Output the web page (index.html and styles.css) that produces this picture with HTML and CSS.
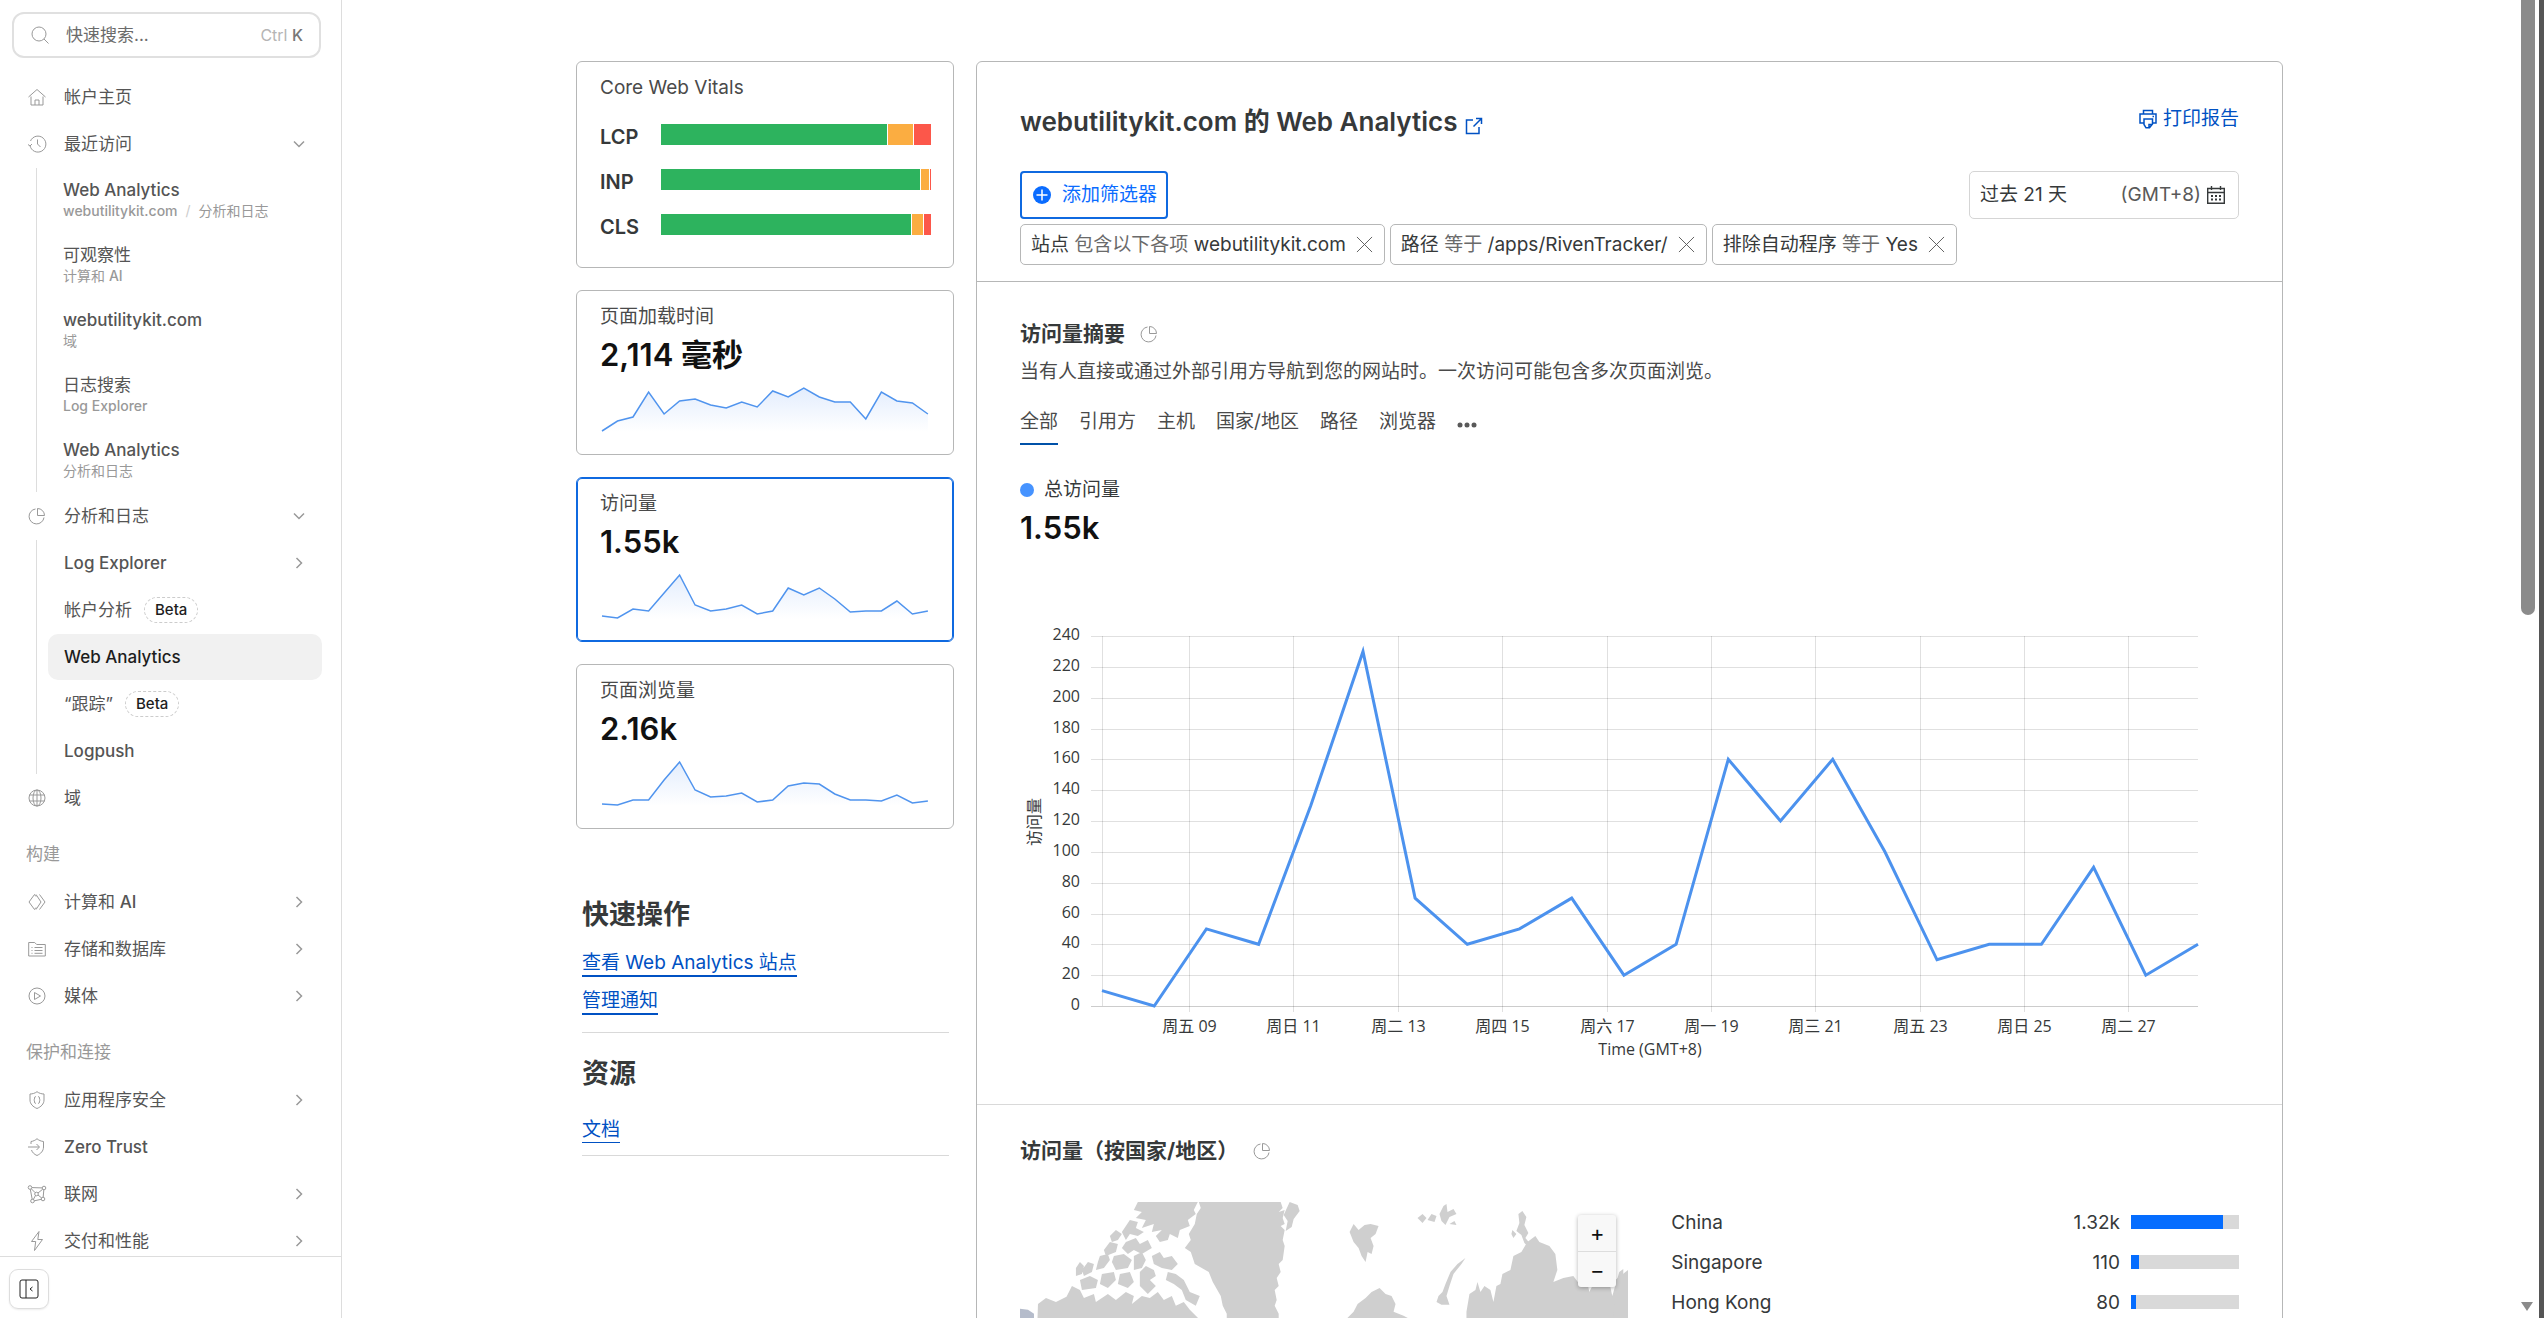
FILE: index.html
```html
<!DOCTYPE html>
<html lang="zh-CN">
<head>
  <meta charset="UTF-8">
  <title>Web Analytics</title>
  <meta name="viewport" content="width=device-width, initial-scale=1.0">
  <link rel="stylesheet" href="styles.css">
</head>
<body>
  <!-- shared icons -->
  <svg class="sprite" aria-hidden="true">
    <symbol id="i-down" viewBox="0 0 12 12"><path d="M1 3.500l5 5 5-5"/></symbol>
    <symbol id="i-right" viewBox="0 0 12 12"><path d="M3.500 1l5 5-5 5"/></symbol>
    <symbol id="i-pie" viewBox="0 0 18 18"><path d="M7.500 2A7.500 7.500 0 1 0 16 10.500M9.500 1.500v7h7a7 7 0 0 0-7-7z"/></symbol>
    <symbol id="i-close" viewBox="0 0 18 18"><path d="M1 1l16 16M17 1L1 17"/></symbol>
  </svg>

  <aside class="sidebar">
    <label class="search">
      <svg class="icon" viewBox="0 0 18 18"><circle cx="8" cy="8" r="7"/><path d="M13 13l4.500 4.500"/></svg>
      <input type="text" placeholder="快速搜索..." aria-label="快速搜索">
      <span class="keys">Ctrl <b>K</b></span>
    </label>

    <nav class="menu">
      <a class="row" href="#">
        <svg class="icon" viewBox="0 0 18 18"><path d="M.5 9L9 1.500 17.500 9M3 8.500V17h12V8.500M7 17v-5h4v5"/></svg>
        <span>帐户主页</span>
      </a>
      <button class="row" type="button">
        <svg class="icon" viewBox="0 0 18 18"><path d="M2 10.500a8 8 0 1 0 .5-4.500M0 9.500l2 1.500 2-2M9.500 4.500V9l3 3"/></svg>
        <span>最近访问</span>
        <svg class="chev"><use href="#i-down"/></svg>
      </button>
      <div class="sub">
        <a class="recent" href="#"><span class="en">Web Analytics</span><small><b>webutilitykit.com</b> <i>/</i> 分析和日志</small></a>
        <a class="recent" href="#"><span>可观察性</span><small>计算和 <b>AI</b></small></a>
        <a class="recent" href="#"><span class="en">webutilitykit.com</span><small>域</small></a>
        <a class="recent" href="#"><span>日志搜索</span><small><b>Log Explorer</b></small></a>
        <a class="recent" href="#"><span class="en">Web Analytics</span><small>分析和日志</small></a>
      </div>
      <button class="row" type="button">
        <svg class="icon"><use href="#i-pie"/></svg>
        <span>分析和日志</span>
        <svg class="chev"><use href="#i-down"/></svg>
      </button>
      <div class="sub">
        <button class="row" type="button"><span class="en">Log Explorer</span><svg class="chev"><use href="#i-right"/></svg></button>
        <a class="row" href="#"><span>帐户分析</span><em class="beta">Beta</em></a>
        <a class="row active" href="#"><span class="en">Web Analytics</span></a>
        <a class="row" href="#"><span>“跟踪”</span><em class="beta">Beta</em></a>
        <a class="row" href="#"><span class="en">Logpush</span></a>
      </div>
      <a class="row" href="#">
        <svg class="icon" viewBox="0 0 18 18"><circle cx="9" cy="9" r="8"/><ellipse cx="9" cy="9" rx="4" ry="8"/><path d="M9 1v16M1.500 6h15M1.500 12h15"/></svg>
        <span>域</span>
      </a>

      <h6 class="group">构建</h6>
      <button class="row" type="button">
        <svg class="icon" viewBox="0 0 18 18"><path d="M8 3.500L6.500 1.500 1 9l5.500 7.500L8 14.500M8 1.500L13 9l-5 7.500M11.500 1.500L17 9l-5.500 7.500"/></svg>
        <span>计算和 <b>AI</b></span>
        <svg class="chev"><use href="#i-right"/></svg>
      </button>
      <button class="row" type="button">
        <svg class="icon" viewBox="0 0 18 18"><path d="M.7 16V2.500h6l2 2h8.600V16zM3.500 7.500h1M6.500 7.500h8M3.500 10.500h1M6.500 10.500h8M3.500 13.300h1M6.500 13.300h8"/></svg>
        <span>存储和数据库</span>
        <svg class="chev"><use href="#i-right"/></svg>
      </button>
      <button class="row" type="button">
        <svg class="icon" viewBox="0 0 18 18"><circle cx="9" cy="9" r="8"/><path d="M6.500 5.500v7l6-3.500z"/></svg>
        <span>媒体</span>
        <svg class="chev"><use href="#i-right"/></svg>
      </button>

      <h6 class="group">保护和连接</h6>
      <button class="row" type="button">
        <svg class="icon" viewBox="0 0 18 18"><path d="M9 .7c2 1.500 4.500 2.300 7 2.300v6c0 4-3 6.800-7 8.500C5 15.800 2 13 2 9V3c2.500 0 5-.8 7-2.300zM7.800 5.500c-2 0-.6 3-2 3.500 1.400.5 0 3.500 2 3.500M10.200 5.500c2 0 .6 3 2 3.500-1.400.5 0 3.500-2 3.500"/></svg>
        <span>应用程序安全</span>
        <svg class="chev"><use href="#i-right"/></svg>
      </button>
      <a class="row" href="#">
        <svg class="icon" viewBox="0 0 18 18"><path d="M3 6V3.500c2.300-.3 4.300-1.200 6-2.800 1.700 1.600 4 2.500 6.500 2.800V9c0 4-2.800 6.800-6.500 8.500-2.800-1.200-4.700-3-5.500-5.500M0 9h11M8.500 6l3 3-3 3"/></svg>
        <span class="en">Zero Trust</span>
      </a>
      <button class="row" type="button">
        <svg class="icon" viewBox="0 0 18 18"><circle cx="2" cy="2.500" r="1.800"/><circle cx="16" cy="3" r="1.800"/><circle cx="4.500" cy="16" r="1.800"/><circle cx="15" cy="14" r="1.800"/><circle cx="8.500" cy="9" r="1.800"/><path d="M4 2.600l10 .3M2.300 4.300l1.900 10M15.800 5l-.6 7M6.300 15.800l7-1.500M3.500 4l3.700 3.700M14.600 4.300L10 8M7.500 10.500l-2.200 4M10 10l3.700 3"/></svg>
        <span>联网</span>
        <svg class="chev"><use href="#i-right"/></svg>
      </button>
      <button class="row" type="button">
        <svg class="icon" viewBox="0 0 18 18"><path d="M11-.5L3.500 9.500h4.200L6.500 18.500l8-11h-4.700z"/></svg>
        <span>交付和性能</span>
        <svg class="chev"><use href="#i-right"/></svg>
      </button>
    </nav>

    <div class="side-foot">
      <button type="button" class="collapse" aria-label="收起侧边栏">
        <svg viewBox="0 0 20 20"><rect x="1" y="1" width="18" height="18" rx="2"/><path d="M7 1v18M13.500 8L11 10l2.500 2"/></svg>
      </button>
    </div>
  </aside>

  <main class="main">
    <div class="page">
      <div class="left">
        <section class="card vitals">
          <h4>Core Web Vitals</h4>
          <div class="vital"><b>LCP</b><div class="bar"><i class="good" style="flex-grow:225"></i><i class="mid" style="flex-grow:25"></i><i class="bad" style="flex-grow:17"></i></div></div>
          <div class="vital"><b>INP</b><div class="bar"><i class="good" style="flex-grow:258"></i><i class="mid" style="flex-grow:8"></i><i class="bad" style="flex-grow:1"></i></div></div>
          <div class="vital"><b>CLS</b><div class="bar"><i class="good" style="flex-grow:249"></i><i class="mid" style="flex-grow:11"></i><i class="bad" style="flex-grow:7"></i></div></div>
        </section>
        <section class="card metric">
          <h4>页面加载时间</h4>
          <strong>2,114 毫秒</strong>
          <svg class="spark" data-spark="load" viewBox="0 0 331 44"></svg>
        </section>
        <section class="card metric selected">
          <h4>访问量</h4>
          <strong>1.55k</strong>
          <svg class="spark" data-spark="visits" viewBox="0 0 331 44"></svg>
        </section>
        <section class="card metric">
          <h4>页面浏览量</h4>
          <strong>2.16k</strong>
          <svg class="spark" data-spark="views" viewBox="0 0 331 44"></svg>
        </section>

        <div class="links">
          <h3>快速操作</h3>
          <a href="#">查看 Web Analytics 站点</a>
          <a href="#">管理通知</a>
        </div>
        <div class="links docs">
          <h3>资源</h3>
          <a href="#">文档</a>
        </div>
      </div>

      <div class="card report">
        <header class="head">
          <div class="title-row">
            <h1>webutilitykit.com 的 Web Analytics
              <a href="#" aria-label="打开站点"><svg class="ext" viewBox="0 0 18 18"><path d="M8 3H1.500v13.500H14V10M11 1.500h5.500V7M16.500 1.500L8.500 9.500"/></svg></a>
            </h1>
            <a class="print" href="#">
              <svg viewBox="0 0 18 20"><path d="M4.500 5V1.500h9V5M4.500 14H1V5h16v9h-3.500M5 10h8.500v5l-3 3.800H7L5 15.500zM10 18.500v-3h3.500M13.500 7.500h1.500"/></svg>
              打印报告
            </a>
          </div>
          <div class="filter-row">
            <button type="button" class="add">
              <svg viewBox="0 0 18 18"><circle cx="9" cy="9" r="9"/><path d="M9 3.500v11M3.500 9h11"/></svg>
              添加筛选器
            </button>
            <button type="button" class="date">
              <span>过去 21 天</span>
              <span class="tz">(GMT+8)</span>
              <svg viewBox="0 0 18 18"><path d="M.7 2.500h16.600v14.800H.7zM.7 6.500h16.600M4.500 0v4M13.500 0v4"/><path class="dots" d="M4 10h2M8 10h2M12 10h2M4 13.500h2M8 13.500h2M12 13.500h2"/></svg>
            </button>
          </div>
          <div class="chips">
            <span class="chip"><span>站点 <i>包含以下各项</i> webutilitykit.com</span><button type="button" aria-label="移除"><svg><use href="#i-close"/></svg></button></span>
            <span class="chip"><span>路径 <i>等于</i> /apps/RivenTracker/</span><button type="button" aria-label="移除"><svg><use href="#i-close"/></svg></button></span>
            <span class="chip"><span>排除自动程序 <i>等于</i> Yes</span><button type="button" aria-label="移除"><svg><use href="#i-close"/></svg></button></span>
          </div>
        </header>

        <section class="summary">
          <h2>访问量摘要 <svg><use href="#i-pie"/></svg></h2>
          <p>当有人直接或通过外部引用方导航到您的网站时。一次访问可能包含多次页面浏览。</p>
          <div class="tabs">
            <button type="button" class="on">全部</button>
            <button type="button">引用方</button>
            <button type="button">主机</button>
            <button type="button">国家/地区</button>
            <button type="button">路径</button>
            <button type="button">浏览器</button>
            <button type="button" aria-label="更多"><svg viewBox="0 0 20 6"><circle cx="3" cy="3" r="2.500"/><circle cx="10" cy="3" r="2.500"/><circle cx="17" cy="3" r="2.500"/></svg></button>
          </div>
          <div class="legend"><i></i>总访问量</div>
          <strong class="total">1.55k</strong>
          <svg class="chart" id="chart" viewBox="0 0 1219 442"></svg>
        </section>

        <section class="geo">
          <h2>访问量（按国家/地区） <svg><use href="#i-pie"/></svg></h2>
          <div class="geo-grid">
            <div class="map">
              <svg viewBox="0 0 609 320">
                <!-- arctic islands -->
                <path d="M118 0h60l-4 8 2 4-8 6 2 6-10 4-2 8-8-4-2 6-8 2-4-6 6-6-10 2 2-8-12 4 4-8-10-2 6-6-8-2zM110 18l8 2-2 6 8 4-6 4-8-2-4 6-4-8zM96 28l6 4-4 6-6 2-2-6zM106 40l10-4 4 6 8-4 4 8-10 6-8-4-6 4-6-6zM90 40l8 2-2 8-10 4-2-6zM80 54l8-2 2 6-6 8-8 2 2-8zM94 54l10-2 8 6-4 8-12 2-4-8zM114 54l8-4 4 8-4 8-8 2zM68 60l6 2-2 8-8 4-2-6zM56 66l4-6 4 4-2 8-6 2zM60 78l10-4 8 4-2 8-14 2zM82 72l12-2 2 8-8 8-8-4zM100 72l10-2 4 10-6 6-10-4zM120 70l6-6 8 4 2 6-6 4 6 6-8 8-8-8zM132 54l8-4 4 6 8-2 6 8-6 6-10-2-8-4zM148 70l8 2 8 6 6 12 10 4-4 10-10-6-4-10-8-6-8-4z"/>
                <!-- mainland coast -->
                <path d="M52 84l8 4 4 8 10-4 2 8 12-8 8 6 10-8 8 4-2 8 10-8 8 2 8-6 6 8 8-4 4 10 8-4 6 8 8 8 10 6v108H40V108zM18 102l8-6 10 4 12-6 4 20 6 106H14z"/>
                <path class="us" d="M0 107l8 1 6 4v108H0z"/>
                <!-- greenland -->
                <path d="M180 0h81l2 6-4 4 6-2-2 8 2 6-4 2 4 4-2 10 2 6-2 14-4 4 2 8-4 6 2 8-4 4 2 10-2 6 4 8v104h-52V112l-4-8-2-10-8-14-4-10-14-8-4-12-6-4 6-8-2-6 6-10 2-10 4-6-2-6z"/>
                <path d="M270 0l8 3 2 6-6 8-2 8-6 4 2-10-4-6zM330 30l4-8 5 6 6-5 6-1 8 2-3 8-5 4 3 8-2 8-4-2-2 10-4-6-3-8-5-6zM398 16l5-4 4 4-4 5zM408 18l4-6 5 2-2 6zM420 12l4-8 3-2 1 8 6-3 3 5-7 3-4 8-4-4zM430 22l5-3 2 4z"/>
                <path d="M493 28l4 4-3 4-2-4zM499 12l4-3 4 6-2 8 4 8-3 5 5 6 5 3 3 8-6 1-4-9-4-4-3-8-5-4 3-8zM446 56l-8 6-7 8-5 12-3 8-4 4-2 6 5 3 8 0-3-9 3-10 4-12 8-10z"/>
                <!-- eurasia -->
                <path d="M328 116l6-6 4-8 8-6 6-6 8-4 6 6 6 2 4 8-2 8 10 4 12 6v104H328zM447 118v-8l3-18 6-4 2-8 3 10 4-6 6 4 3 12 3-16 4-2 2-10 8-4 3-14 8-4 6-10 8-6 4 6 10 4 6 8 2 16-4 12 10-4 10-2 6 8 8-2 2 10 6-12 8 6 6-4 3 14 7-24 4-3V220H447z"/>
                <path d="M596 78l13-10v152h-20z"/>
              </svg>
              <div class="zoom">
                <button type="button" aria-label="放大">+</button>
                <button type="button" aria-label="缩小">−</button>
              </div>
            </div>
            <table class="countries">
              <tr><th scope="row">China</th><td>1.32k</td><td class="meter"><div><i style="width:85%"></i></div></td></tr>
              <tr><th scope="row">Singapore</th><td>110</td><td class="meter"><div><i style="width:7%"></i></div></td></tr>
              <tr><th scope="row">Hong Kong</th><td>80</td><td class="meter"><div><i style="width:5%"></i></div></td></tr>
            </table>
          </div>
        </section>
      </div>
    </div>
  </main>

  <div class="scroll" aria-hidden="true">
    <div class="thumb"></div>
    <svg viewBox="0 0 12 10"><path d="M0 0h12L6 9z"/></svg>
  </div>

  <script src="charts.js"></script>
</body>
</html>
```
FILE: styles.css
```css
* {
  box-sizing: border-box;
}

body {
  margin: 0;
  height: 100vh;
  display: flex;
  overflow: hidden;
  background: #fff;
  color: #36393a;
  font-family: Inter, "Noto Sans CJK SC", sans-serif;
  font-size: 19px;
}

h1, h2, h3, h4, h6, p {
  margin: 0;
}

a {
  color: inherit;
  text-decoration: none;
}

button {
  font: inherit;
  color: inherit;
  background: none;
  border: 0;
  padding: 0;
  cursor: pointer;
}

i, em {
  font-style: normal;
}

svg {
  fill: none;
  stroke: currentColor;
  flex: none;
}

.sprite {
  display: none;
}

/* sidebar */
.sidebar {
  width: 342px;
  flex: none;
  display: flex;
  flex-direction: column;
  border-right: 1px solid #ddd;
  font-size: 17px;
  color: #555;
}

.sidebar b,
.en {
  font-weight: 500;
}

.search {
  display: flex;
  align-items: center;
  gap: 17px;
  height: 46px;
  margin: 12px 20px 16px 12px;
  padding: 0 16px 0 17px;
  border: 2px solid #e0e0e0;
  border-radius: 12px;
}

.search input {
  flex: 1;
  min-width: 0;
  border: 0;
  outline: 0;
  padding: 0;
  font: inherit;
  color: #555;
}

.search input::placeholder {
  color: #6b6b6b;
}

.keys {
  font-size: 16px;
  color: #b5b5b5;
}

.keys b {
  color: #777;
}

.icon {
  width: 18px;
  height: 18px;
  color: #999;
  overflow: visible;
}

.menu {
  flex: 1;
  min-height: 0;
  overflow: hidden;
  display: flex;
  flex-direction: column;
  gap: 1px;
  padding: 0 19px 0 12px;
}

.row {
  display: flex;
  flex: none;
  align-items: center;
  gap: 18px;
  width: 100%;
  height: 46px;
  padding: 0 17px 0 16px;
  border-radius: 10px;
  line-height: 24px;
  text-align: left;
}

.row.active {
  background: #f1f1f1;
  color: #1d1d1d;
}

.chev {
  width: 12px;
  height: 12px;
  margin-left: auto;
  color: #999;
  stroke-width: 1.500;
}

.sub {
  flex: none;
  display: flex;
  flex-direction: column;
  gap: 1px;
  margin-left: 24px;
  padding-left: 11px;
  border-left: 1px solid #ddd;
}

.sub .row {
  gap: 12px;
}

.recent {
  display: flex;
  flex-direction: column;
  justify-content: center;
  height: 64px;
  padding-left: 15px;
  line-height: 22px;
}

.recent small {
  font-size: 14px;
  line-height: 20px;
  color: #999;
}

.recent i {
  margin: 0 4px;
  color: #ccc;
}

.beta {
  height: 26px;
  padding: 0 10px;
  border: 1px dashed #ccc;
  border-radius: 13px;
  font-size: 15px;
  font-weight: 500;
  line-height: 24px;
  color: #1d1d1d;
}

.group {
  flex: none;
  padding: 20px 14px 12px;
  font-size: 17px;
  font-weight: 400;
  line-height: 24px;
  color: #999;
}

.side-foot {
  padding: 12px 9px 9px;
  border-top: 1px solid #ddd;
}

.collapse {
  display: flex;
  align-items: center;
  justify-content: center;
  width: 40px;
  height: 40px;
  border: 1px solid #ddd;
  border-radius: 9px;
  box-shadow: 0 1px 2px rgba(0, 0, 0, 0.08);
  color: #222;
}

.collapse svg {
  width: 20px;
  height: 20px;
}

/* main */
.main {
  flex: 1;
  min-width: 0;
  overflow: hidden;
}

.page {
  display: grid;
  grid-template-columns: 378px minmax(0, 1fr);
  align-items: start;
  gap: 22px;
  max-width: 1707px;
  margin: 0 auto;
  padding-top: 61px;
}

.card {
  border: 1px solid #b6b7b7;
  border-radius: 6px;
}

.left {
  display: flex;
  flex-direction: column;
  gap: 22px;
}

.card h4 {
  font-size: 19px;
  font-weight: 400;
  line-height: 24px;
  color: #4a4a4a;
}

.vitals {
  padding: 14px 22px 8px 23px;
}

.vitals h4 {
  margin-bottom: 24px;
}

.vital {
  display: flex;
  height: 45px;
}

.vital b {
  width: 61px;
  font-size: 20px;
  font-weight: 600;
  line-height: 26px;
}

.bar {
  flex: 1;
  display: flex;
  gap: 1px;
  height: 21px;
}

.bar i {
  flex-basis: 0;
}

.good { background: #2db35e; }
.mid { background: #fbad41; }
.bad { background: #fc574a; }

.metric {
  display: flex;
  flex-direction: column;
  padding: 14px 22px 22px 23px;
}

.metric.selected {
  border-color: #0f69e0;
  box-shadow: inset 0 0 0 1px #0f69e0;
}

.metric strong,
.total {
  display: block;
  margin-top: 7px;
  font-size: 31px;
  font-weight: 600;
  line-height: 38px;
  color: #111;
}

.spark {
  display: block;
  width: 100%;
  margin-top: 14px;
  overflow: visible;
}

.spark-line {
  stroke: #5094ee;
  stroke-width: 1.500;
}

.spark-fill {
  stroke: none;
  fill: url(#spark-fade);
}

.links {
  display: flex;
  flex-direction: column;
  align-items: flex-start;
  gap: 12px;
  margin: 48px 5px 0 6px;
  padding-bottom: 17px;
  border-bottom: 1px solid #d9d9d9;
}

.links h3 {
  margin-bottom: 8px;
  font-size: 27px;
  line-height: 32px;
}

.links a {
  line-height: 24px;
  border-bottom: 2px solid #0051c3;
  color: #0051c3;
}

.docs {
  margin-top: 3px;
  padding-bottom: 12px;
}

.docs h3 {
  margin-bottom: 16px;
}

.docs a {
  border-bottom-width: 1px;
}

.head {
  padding: 43px 43px 16px;
  border-bottom: 1px solid #b6b7b7;
}

.title-row,
.filter-row {
  display: flex;
  justify-content: space-between;
}

.title-row {
  margin-bottom: 32px;
}

h1 {
  font-size: 26px;
  font-weight: 600;
  line-height: 34px;
}

.ext {
  width: 18px;
  height: 18px;
  margin-left: 1px;
  vertical-align: -4px;
  color: #0051c3;
  stroke-width: 1.500;
}

.print {
  display: flex;
  align-items: center;
  gap: 6px;
  height: 28px;
  line-height: 28px;
  color: #0051c3;
}

.print svg {
  width: 18px;
  height: 20px;
  stroke-width: 1.500;
}

.add,
.date {
  display: flex;
  align-items: center;
  height: 48px;
  border: 1px solid #d5d5d5;
  border-radius: 5px;
  line-height: 24px;
}

.add {
  gap: 11px;
  padding: 0 9px 0 11px;
  border: 2px solid #0f69e0;
  border-radius: 4px;
  color: #0a6cff;
}

.add svg {
  width: 18px;
  height: 18px;
  fill: #0a6cff;
  stroke: none;
}

.add path {
  stroke: #fff;
  stroke-width: 1.500;
}

.date {
  width: 270px;
  padding: 0 13px 0 10px;
}

.date .tz {
  margin-left: auto;
  margin-right: 6px;
  color: #595959;
}

.date svg {
  width: 18px;
  height: 18px;
  stroke-width: 1.400;
}

.date .dots {
  stroke-width: 2;
}

.chips {
  display: flex;
  gap: 5px;
  margin-top: 5px;
}

.chip {
  display: flex;
  align-items: center;
  gap: 10px;
  height: 41px;
  padding: 0 11px 0 10px;
  border: 1px solid #b6b7b7;
  border-radius: 5px;
  line-height: 24px;
}

.chip i {
  color: #6a6a6a;
}

.chip button,
.chip svg {
  display: block;
  width: 17px;
  height: 17px;
  color: #595959;
}

.summary {
  padding: 39px 43px 42px;
}

h2 {
  font-size: 21px;
  line-height: 26px;
}

h2 svg {
  width: 18px;
  height: 18px;
  margin-left: 10px;
  vertical-align: -2px;
  color: #999;
}

.summary p {
  margin-top: 11px;
  line-height: 28px;
  color: #4a4a4a;
}

.tabs {
  display: flex;
  gap: 21px;
  margin-top: 22px;
}

.tabs button {
  height: 37px;
  padding-bottom: 7px;
  border-bottom: 2px solid transparent;
  line-height: 28px;
  color: #4a4a4a;
}

.tabs .on {
  border-color: #0051a8;
}

.tabs svg {
  width: 20px;
  height: 6px;
  fill: #595959;
  stroke: none;
}

.legend {
  display: flex;
  align-items: center;
  gap: 10px;
  margin-top: 31px;
  line-height: 28px;
}

.legend i {
  width: 14px;
  height: 14px;
  border-radius: 50%;
  background: #4693ff;
}

.total {
  margin-top: 5px;
}

.chart {
  display: block;
  width: 100%;
  margin-top: 73px;
}

.chart text {
  font-family: "Open Sans", "Noto Sans CJK SC", sans-serif;
  font-size: 16px;
  fill: #36393a;
  stroke: none;
}

.chart line {
  stroke: #000;
  stroke-opacity: 0.120;
}

.chart .axis {
  stroke-opacity: 0.200;
}

.chart polyline {
  stroke: #4c92ee;
  stroke-width: 3;
}

.geo {
  padding: 33px 43px;
  border-top: 1px solid #d9d9d9;
}

.geo-grid {
  display: grid;
  grid-template-columns: minmax(0, 15fr) minmax(0, 14fr);
  align-items: start;
  gap: 43px;
  margin-top: 38px;
}

.map {
  position: relative;
}

.map > svg {
  display: block;
  width: 100%;
  fill: #cfcfcf;
  stroke: none;
}

.map .us {
  fill: #b5bccb;
}

.zoom {
  position: absolute;
  top: 13px;
  right: 12px;
  display: flex;
  flex-direction: column;
  width: 38px;
  border-radius: 3px;
  background: #f8f8f8;
  box-shadow: 0 1px 4px rgba(0, 0, 0, 0.3);
}

.zoom button {
  height: 36px;
  font-size: 22px;
  line-height: 34px;
  color: #111;
}

.zoom button + button {
  border-top: 1px solid #ddd;
}

.countries {
  width: 100%;
  border-collapse: collapse;
}

.countries tr {
  height: 40px;
}

.countries th {
  padding: 0;
  font-weight: 400;
  text-align: left;
}

.countries td {
  padding: 0;
  text-align: right;
}

.countries .meter {
  width: 119px;
  padding-left: 11px;
}

.meter div {
  height: 14px;
  background: #d9d9d9;
}

.meter i {
  display: block;
  height: 14px;
  background: #056dff;
}

/* page scrollbar */
.scroll {
  flex: none;
  display: flex;
  flex-direction: column;
  justify-content: space-between;
  width: 27px;
  padding: 0 8px 6px 4px;
  border-right: 5px solid #555;
}

.thumb {
  height: 615px;
  width: 14px;
  border-radius: 0 0 7px 7px;
  background: #8b8b8b;
}

.scroll svg {
  width: 12px;
  height: 10px;
  fill: #8b8b8b;
  stroke: none;
}
```
FILE: charts.js
```js
const sparks = {
  // pixels below the top of the sparkline
  load: [43, 33, 29, 4, 26, 13, 11, 17, 20, 14, 19, 3, 9, 0, 9, 14, 14, 31, 4, 13, 15, 26],
  visits: [41, 43, 34, 36, 18, 0, 30, 36, 34, 30, 39, 36, 13, 20, 13, 24, 37, 36, 36, 26, 39, 36],
  views: [42, 43, 38, 38, 18, 0, 28, 35, 34, 31, 40, 38, 24, 21, 22, 32, 38, 38, 39, 33, 41, 39]
};

document.querySelectorAll('[data-spark]').forEach(svg => {
  const points = sparks[svg.dataset.spark].map((y, i) => `${(2 + i * 15.520).toFixed(1)},${y}`).join(' ');
  svg.innerHTML = `
    <defs><linearGradient id="spark-fade" x1="0" y1="0" x2="0" y2="1">
      <stop offset="0" stop-color="#e3edfd"/><stop offset="1" stop-color="#fff"/>
    </linearGradient></defs>
    <polygon class="spark-fill" points="2,44 ${points} 328,44"/>
    <polyline class="spark-line" points="${points}"/>`;
});

const visits = [10, 0, 50, 40, 130, 230, 70, 40, 50, 70, 20, 40, 160, 120, 160, 100, 30, 40, 40, 90, 20, 40];
const days = ['周五 09', '周日 11', '周二 13', '周四 15', '周六 17', '周一 19', '周三 21', '周五 23', '周日 25', '周二 27'];

const left = 82, right = 1178, top0 = 16, bottom = 386;
const step = (right - left) / (visits.length - 1);
const yAt = v => bottom - v * (bottom - top0) / 240;

let out = '';
for (let v = 0; v <= 240; v += 20) {
  const y = Math.round(yAt(v)) + 0.5;
  out += `<line class="${v === 0 ? 'axis' : ''}" x1="${left - 11}" x2="${right}" y1="${y}" y2="${y}"/>`;
  out += `<text x="60" y="${y + 3}" text-anchor="end">${v}</text>`;
}
out += `<line x1="${left + 0.5}" x2="${left + 0.5}" y1="${top0}" y2="${bottom}"/>`;
days.forEach((day, i) => {
  const x = Math.round(left + 87 + i * step * 2) + 0.5;
  out += `<line x1="${x}" x2="${x}" y1="${top0}" y2="${bottom + 6}"/>`;
  out += `<text x="${x}" y="412" text-anchor="middle">${day}</text>`;
});
out += `<text x="${(left + right) / 2}" y="435" text-anchor="middle">Time (GMT+8)</text>`;
out += `<text transform="translate(20 202) rotate(-90)" text-anchor="middle">访问量</text>`;
out += `<polyline points="${visits.map((v, i) => `${(left + i * step).toFixed(1)},${yAt(v).toFixed(1)}`).join(' ')}"/>`;
document.getElementById('chart').innerHTML = out;
```
